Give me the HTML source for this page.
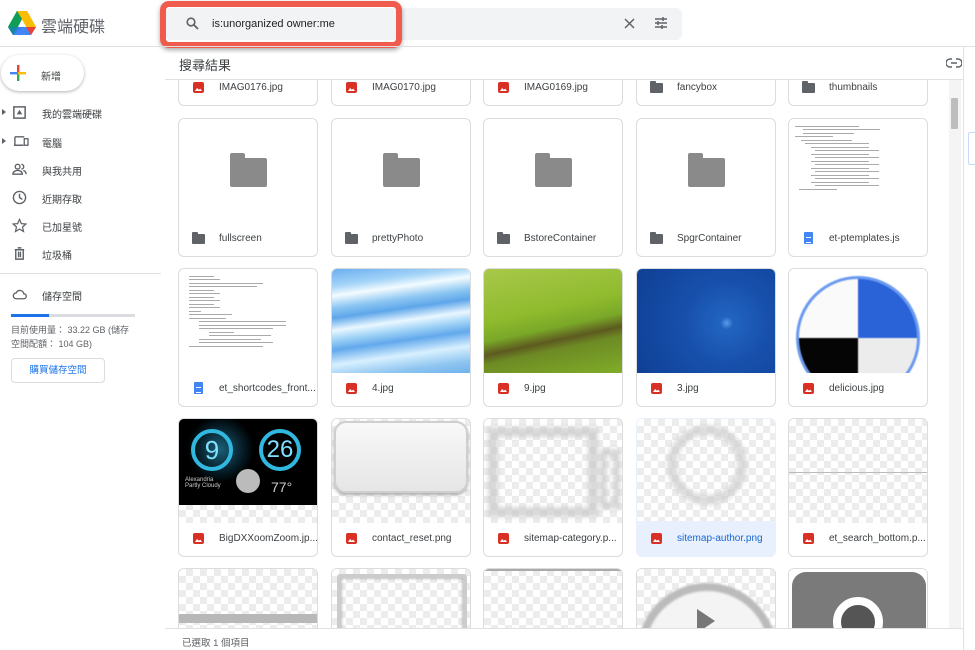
<!DOCTYPE html>
<html style="overflow:hidden"><head><meta charset="utf-8"><style>
*{box-sizing:border-box;margin:0;padding:0}
html,body{width:975px;height:650px;overflow:hidden}
body{background:#fff;font-family:"Liberation Sans","Noto Sans CJK TC",sans-serif;color:#3c4043;position:relative}
.abs{position:absolute}
.nav{position:absolute;left:0;width:160px;height:28px;font-size:10px;color:#3c4043}
.nav .ic{position:absolute;left:12px;top:7px;width:15px;height:15px}
.nav span{position:absolute;left:42px;top:8px}
.card{position:absolute;width:140px;height:139px;border:1px solid #dadce0;border-radius:6px;background:#fff;overflow:hidden}
.thumb{position:absolute;left:0;top:0;right:0;height:104px;overflow:hidden}
.lab{position:absolute;left:0;right:0;bottom:0;height:35px;font-size:10px;color:#3c4043}
.lab span{position:absolute;left:40px;top:12px;white-space:nowrap}
.ri{position:absolute;left:14px;top:12px;width:11px;height:11px;background:#d93025;border-radius:2px}
.ri:after{content:"";position:absolute;left:2px;bottom:2px;width:7px;height:3px;background:#fff;clip-path:polygon(0 100%,30% 0,55% 60%,75% 20%,100% 100%)}
.fi{position:absolute;left:13px;top:13px;width:13px;height:10px;background:#5f6368;border-radius:1px}
.fi:before{content:"";position:absolute;left:0;top:-2px;width:6px;height:3px;background:#5f6368;border-radius:1px 1px 0 0}
.di{position:absolute;left:15px;top:11px;width:9px;height:12px;background:#4285f4;border-radius:1px}
.di:after{content:"";position:absolute;left:2px;top:5px;width:5px;height:4px;border-top:1px solid #fff;border-bottom:1px solid #fff}
.chk{background:repeating-conic-gradient(#ececec 0 25%,#fff 0 50%) 0 0/14px 14px}
.bigf{position:absolute;left:51px;top:39px;width:37px;height:29px;background:#8a8a8a;border-radius:2px}
.bigf:before{content:"";position:absolute;left:0;top:-5px;width:15px;height:6px;background:#8a8a8a;border-radius:2px 2px 0 0}
.code{background:#fff;padding:4px}
.code i{display:block;height:1px;background:#aaa;margin:2.5px 0}
</style></head><body>

<svg class="abs" style="left:8px;top:11px" width="28" height="24" viewBox="0 0 28 24">
<polygon points="9,0 19,0 28,16 23,24" fill="#fbbc04"/>
<polygon points="9,0 0,16 5,24 14,8" fill="#0f9d58"/>
<polygon points="5,24 23,24 28,16 10,16" fill="#4285f4"/>
<polygon points="14,8 10,16 5,24 0,16 9,0" fill="#0f9d58"/>
<polygon points="0,16 5,24 14,16" fill="#1a73e8" opacity="0.5"/>
<polygon points="19,0 28,16 22,16 13,0" fill="#fbbc04"/>
<polygon points="28,16 23,24 18,16" fill="#ea4335"/>
</svg>
<div class="abs" style="left:41px;top:13px;font-size:16px;color:#5f6368">雲端硬碟</div>
<div class="abs" style="left:165px;top:8px;width:517px;height:32px;background:#f1f3f4;border-radius:6px"></div>
<div class="abs" style="left:160px;top:1px;width:242px;height:47px;border:6px solid #ef5b4c;border-radius:9px;box-shadow:0 2px 5px rgba(0,0,0,.35)"></div>
<svg class="abs" style="left:186px;top:17px" width="13" height="13" viewBox="0 0 13 13"><circle cx="5" cy="5" r="3.8" fill="none" stroke="#5f6368" stroke-width="1.6"/><line x1="8" y1="8" x2="12" y2="12" stroke="#5f6368" stroke-width="1.8"/></svg>
<div class="abs" style="left:212px;top:18px;font-size:11px;color:#202124">is:unorganized owner:me</div>
<svg class="abs" style="left:624px;top:18px" width="11" height="11" viewBox="0 0 11 11"><path d="M1 1L10 10M10 1L1 10" stroke="#5f6368" stroke-width="1.5"/></svg>
<svg class="abs" style="left:654px;top:16px" width="14" height="14" viewBox="0 0 14 14" stroke="#5f6368" stroke-width="1.5"><path d="M1 3h12M1 7h12M1 11h12"/><path d="M9 1v4M4 5v4M8 9v4" /></svg>
<div class="abs" style="left:0;top:46px;width:975px;height:1px;background:#e0e0e0"></div>

<div class="abs" style="left:1px;top:55px;width:83px;height:36px;border-radius:18px;box-shadow:0 1px 3px rgba(0,0,0,.3);background:#fff"></div>
<svg class="abs" style="left:10px;top:65px" width="16" height="16" viewBox="0 0 16 16"><rect x="7" y="0" width="2.4" height="8" fill="#ea4335"/><rect x="7" y="8" width="2.4" height="8" fill="#34a853"/><rect x="0" y="7" width="8" height="2.4" fill="#4285f4"/><rect x="8" y="7" width="8" height="2.4" fill="#fbbc04"/></svg>
<div class="abs" style="left:41px;top:68px;font-size:10px;color:#3c4043">新增</div>

<div class="abs" style="left:2px;top:109px;border-left:4px solid #5f6368;border-top:3px solid transparent;border-bottom:3px solid transparent"></div>
<div class="nav" style="top:98px"><svg class="ic" viewBox="0 0 16 16"><rect x="2" y="2" width="12" height="12" fill="none" stroke="#5f6368" stroke-width="1.6"/><path d="M5 10h6l-3-5z" fill="#5f6368"/></svg><span>我的雲端硬碟</span></div>
<div class="abs" style="left:2px;top:138px;border-left:4px solid #5f6368;border-top:3px solid transparent;border-bottom:3px solid transparent"></div>
<div class="nav" style="top:127px"><svg class="ic" viewBox="0 0 16 16" style="width:17px"><path d="M2 3h10M2 3v9M1 12h10" stroke="#5f6368" stroke-width="1.5" fill="none"/><rect x="12" y="5" width="4" height="7" fill="none" stroke="#5f6368" stroke-width="1.4"/></svg><span>電腦</span></div>
<div class="nav" style="top:155px"><svg class="ic" viewBox="0 0 16 16"><circle cx="6" cy="5" r="2.5" fill="none" stroke="#5f6368" stroke-width="1.5"/><path d="M1 13c0-3 3-4 5-4s5 1 5 4z" fill="none" stroke="#5f6368" stroke-width="1.5"/><path d="M10 2.5a2.5 2.5 0 010 5M12 9c2 .5 3 2 3 4" fill="none" stroke="#5f6368" stroke-width="1.5"/></svg><span>與我共用</span></div>
<div class="nav" style="top:183px"><svg class="ic" viewBox="0 0 16 16"><circle cx="8" cy="8" r="6.5" fill="none" stroke="#5f6368" stroke-width="1.5"/><path d="M8 4v4l3 2" fill="none" stroke="#5f6368" stroke-width="1.5"/></svg><span>近期存取</span></div>
<div class="nav" style="top:211px"><svg class="ic" viewBox="0 0 16 16"><path d="M8 1.5l2 4.5 4.8.4-3.6 3.2 1.1 4.8L8 11.8l-4.3 2.6 1.1-4.8L1.2 6.4 6 6z" fill="none" stroke="#5f6368" stroke-width="1.3"/></svg><span>已加星號</span></div>
<div class="nav" style="top:239px"><svg class="ic" viewBox="0 0 16 16"><path d="M3 4h10M6 2h4M4 4v10h8V4M7 6v6M9 6v6" fill="none" stroke="#5f6368" stroke-width="1.5"/></svg><span>垃圾桶</span></div>
<div class="abs" style="left:0;top:273px;width:161px;height:1px;background:#e0e0e0"></div>
<div class="nav" style="top:280px"><svg class="ic" viewBox="0 0 16 16"><path d="M4.5 12.5h8a2.7 2.7 0 000-5.4 4.2 4.2 0 00-8-.8 3.1 3.1 0 000 6.2z" fill="none" stroke="#5f6368" stroke-width="1.4"/></svg><span>儲存空間</span></div>
<div class="abs" style="left:11px;top:314px;width:124px;height:3px;background:#dadce0"></div>
<div class="abs" style="left:11px;top:314px;width:38px;height:3px;background:#1a73e8"></div>
<div class="abs" style="left:11px;top:323px;font-size:9px;line-height:14px;color:#5f6368">目前使用量： 33.22 GB (儲存<br>空間配額： 104 GB)</div>
<div class="abs" style="left:11px;top:358px;width:94px;height:25px;border:1px solid #dadce0;border-radius:4px;font-size:9.5px;color:#1a73e8;text-align:center;line-height:23px">購買儲存空間</div>

<div class="abs" style="left:179px;top:55px;font-size:13px;color:#3c4043">搜尋結果</div>
<svg class="abs" style="left:946px;top:58px" width="16" height="10" viewBox="0 0 16 10"><path d="M6 1H4a4 4 0 000 8h2M10 1h2a4 4 0 010 8h-2M5 5h6" fill="none" stroke="#5f6368" stroke-width="1.4"/></svg>
<div class="abs" style="left:165px;top:79px;width:798px;height:1px;background:#e0e0e0"></div>
<div class="abs" style="left:963px;top:46px;width:1px;height:604px;background:#e0e0e0"></div>
<div class="abs" style="left:968px;top:132px;width:7px;height:33px;border:1px solid #c6dafc;border-right:none;border-radius:2px 0 0 2px"></div>

<div class="abs" style="left:165px;top:80px;width:784px;height:548px;overflow:hidden">
<div class="card" style="left:13px;top:-113px"><div class="lab"><i class="ri"></i><span>IMAG0176.jpg</span></div></div>
<div class="card" style="left:166px;top:-113px"><div class="lab"><i class="ri"></i><span>IMAG0170.jpg</span></div></div>
<div class="card" style="left:318px;top:-113px"><div class="lab"><i class="ri"></i><span>IMAG0169.jpg</span></div></div>
<div class="card" style="left:471px;top:-113px"><div class="lab"><i class="fi"></i><span>fancybox</span></div></div>
<div class="card" style="left:623px;top:-113px"><div class="lab"><i class="fi"></i><span>thumbnails</span></div></div>

<div class="card" style="left:13px;top:38px"><div class="bigf"></div><div class="lab"><i class="fi"></i><span>fullscreen</span></div></div>
<div class="card" style="left:166px;top:38px"><div class="bigf"></div><div class="lab"><i class="fi"></i><span>prettyPhoto</span></div></div>
<div class="card" style="left:318px;top:38px"><div class="bigf"></div><div class="lab"><i class="fi"></i><span>BstoreContainer</span></div></div>
<div class="card" style="left:471px;top:38px"><div class="bigf"></div><div class="lab"><i class="fi"></i><span>SpgrContainer</span></div></div>
<div class="card" style="left:623px;top:38px"><div class="thumb code" style="padding-left:6px"><i style="width:50%"></i><i style="width:60%;margin-left:8px"></i><i style="width:40%;margin-left:8px"></i><i style="width:30%"></i><i style="width:40%;margin-left:6px"></i><i style="width:50%;margin-left:10px"></i><i style="width:45%;margin-left:16px"></i><i style="width:50%;margin-left:20px"></i><i style="width:45%;margin-left:16px"></i><i style="width:50%;margin-left:20px"></i><i style="width:45%;margin-left:16px"></i><i style="width:50%;margin-left:20px"></i><i style="width:45%;margin-left:16px"></i><i style="width:50%;margin-left:20px"></i><i style="width:45%;margin-left:16px"></i><i style="width:50%;margin-left:20px"></i><i style="width:45%;margin-left:16px"></i><i style="width:50%;margin-left:20px"></i><i style="width:30%;margin-left:4px"></i></div><div class="lab"><i class="di"></i><span>et-ptemplates.js</span></div></div>

<div class="card" style="left:13px;top:188px"><div class="thumb code" style="padding-left:10px"><i style="width:20%"></i><i style="width:25%"></i><i style="width:60%"></i><i style="width:55%"></i><i style="width:20%"></i><i style="width:25%"></i><i style="width:20%"></i><i style="width:25%"></i><i style="width:20%"></i><i style="width:25%"></i><i style="width:10%"></i><i style="width:35%"></i><i style="width:30%"></i><i style="width:70%;margin-left:10px"></i><i style="width:70%;margin-left:10px"></i><i style="width:60%;margin-left:10px"></i><i style="width:20%;margin-left:20px"></i><i style="width:50%;margin-left:20px"></i><i style="width:50%;margin-left:10px"></i><i style="width:60%;margin-left:10px"></i><i style="width:60%"></i></div><div class="lab"><i class="di"></i><span>et_shortcodes_front...</span></div></div>
<div class="card" style="left:166px;top:188px"><div class="thumb" style="background:linear-gradient(172deg,#6aaef0 0%,#a4d4f8 14%,#f2fbff 22%,#8cc6f2 32%,#5ea6ea 40%,#e9f7ff 50%,#9ed2f6 58%,#62a8ec 66%,#d8f0ff 78%,#8fc6f0 90%,#6fb2ee 100%)"></div><div class="lab"><i class="ri"></i><span>4.jpg</span></div></div>
<div class="card" style="left:318px;top:188px"><div class="thumb" style="background:linear-gradient(168deg,#a8c84a 0%,#90bb2e 40%,#7aa828 55%,#5d5a20 65%,#6d8a24 72%,#80ad28 100%)"></div><div class="lab"><i class="ri"></i><span>9.jpg</span></div></div>
<div class="card" style="left:471px;top:188px"><div class="thumb" style="background:radial-gradient(circle at 65% 52%,#5a9ae8 0,#2164c0 6%,#1750ac 40%,#0f3f94 100%)"></div><div class="lab"><i class="ri"></i><span>3.jpg</span></div></div>
<div class="card" style="left:623px;top:188px"><div class="thumb" style="background:#fff"><div style="position:absolute;left:7px;top:7px;width:124px;height:124px;border-radius:50%;border:3px solid #6b9af0;background:conic-gradient(#2a63d8 0 25%,#ececec 0 50%,#050505 0 75%,#fafafa 0 100%);filter:blur(0.6px)"></div></div><div class="lab"><i class="ri"></i><span>delicious.jpg</span></div></div>

<div class="card" style="left:13px;top:338px"><div class="thumb chk"><div style="position:absolute;left:0;top:0;right:0;height:86px;background:radial-gradient(circle at 30% 35%,#1a5f78 0,#051820 22%,#000 30%),#000"><div style="position:absolute;left:12px;top:10px;width:42px;height:42px;border-radius:50%;border:4px solid #30b8e0;color:#7fe0ff;font-size:26px;text-align:center;line-height:34px">9</div><div style="position:absolute;left:80px;top:10px;width:42px;height:42px;border-radius:50%;border:4px solid #30b8e0;color:#7fe0ff;font-size:24px;text-align:center;line-height:34px">26</div><div style="position:absolute;left:57px;top:50px;width:24px;height:24px;border-radius:50%;background:#bbb"></div><div style="position:absolute;left:6px;top:58px;font-size:6px;color:#ccc">Alexandria<br>Partly Cloudy</div><div style="position:absolute;left:92px;top:60px;font-size:14px;color:#ccc">77°</div></div></div><div class="lab"><i class="ri"></i><span>BigDXXoomZoom.jp...</span></div></div>
<div class="card" style="left:166px;top:338px"><div class="thumb chk"><div style="position:absolute;left:2px;top:2px;width:134px;height:72px;border-radius:12px;background:linear-gradient(#f8f8f8,#e6e6e6);border:2px solid #cfcfcf;box-shadow:0 2px 3px #aaa"></div></div><div class="lab"><i class="ri"></i><span>contact_reset.png</span></div></div>
<div class="card" style="left:318px;top:338px"><div class="thumb chk"><div style="position:absolute;left:4px;top:8px;width:110px;height:90px;border:10px solid rgba(200,200,200,.7);filter:blur(2px)"></div><div style="position:absolute;left:116px;top:30px;width:20px;height:60px;border:7px solid rgba(200,200,200,.7);filter:blur(2px)"></div></div><div class="lab"><i class="ri"></i><span>sitemap-category.p...</span></div></div>
<div class="card" style="left:471px;top:338px;border-color:#e8f0fe"><div class="thumb chk"><div style="position:absolute;left:30px;top:6px;width:80px;height:80px;border-radius:50%;border:10px solid rgba(205,205,205,.7);filter:blur(2px)"></div></div><div class="lab" style="background:#e8f0fe;color:#1967d2"><i class="ri"></i><span>sitemap-author.png</span></div></div>
<div class="card" style="left:623px;top:338px"><div class="thumb chk"><div style="position:absolute;left:0;right:0;top:53px;height:1px;background:#bbb"></div></div><div class="lab"><i class="ri"></i><span>et_search_bottom.p...</span></div></div>

<div class="card" style="left:13px;top:488px"><div class="thumb chk"><div style="position:absolute;left:0;right:0;top:45px;height:9px;background:#b8b8b8"></div></div></div>
<div class="card" style="left:166px;top:488px"><div class="thumb chk"><div style="position:absolute;left:5px;top:5px;width:130px;height:100px;border:4px solid #ccc;border-radius:3px;box-shadow:inset 0 0 3px #999"></div></div></div>
<div class="card" style="left:318px;top:488px"><div class="thumb chk"><div style="position:absolute;left:0;right:0;top:0;height:2px;background:#aaa"></div></div></div>
<div class="card" style="left:471px;top:488px"><div class="thumb chk"><div style="position:absolute;left:0;top:14px;width:140px;height:140px;border-radius:50%;background:#f4f4f4;border:8px solid #bbb;filter:blur(1px)"></div><div style="position:absolute;left:60px;top:40px;border-left:18px solid #777;border-top:12px solid transparent;border-bottom:12px solid transparent"></div></div></div>
<div class="card" style="left:623px;top:488px"><div class="thumb" style="background:#fff"><div style="position:absolute;left:3px;top:3px;width:134px;height:120px;border-radius:14px;background:#7a7a7a"></div><div style="position:absolute;left:44px;top:28px;width:50px;height:50px;border-radius:50%;border:8px solid #fff;background:#555"></div></div></div>
</div>

<div class="abs" style="left:949px;top:80px;width:12px;height:548px;background:#f4f4f4"></div>
<div class="abs" style="left:951px;top:98px;width:7px;height:31px;background:#bdbdbd;border-radius:1px"></div>

<div class="abs" style="left:165px;top:628px;width:798px;height:1px;background:#e0e0e0"></div>
<div class="abs" style="left:182px;top:635px;font-size:9.5px;color:#5f6368">已選取 1 個項目</div>
</body></html>
